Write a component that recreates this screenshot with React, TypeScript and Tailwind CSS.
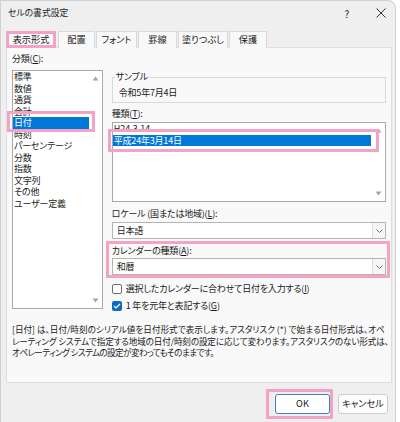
import type { ReactNode } from 'react';

const categories = ['標準', '数値', '通貨', '会計', '日付', '時刻', 'パーセンテージ', '分数', '指数', '文字列', 'その他', 'ユーザー定義'];
const tabs = [
  { label: '表示形式', w: 'w-[50px]' },
  { label: '配置', w: 'w-[37px]' },
  { label: 'フォント', w: 'w-[41px]' },
  { label: '罫線', w: 'w-[39px]' },
  { label: '塗りつぶし', w: 'w-[50px]' },
  { label: '保護', w: 'w-[38px]' },
];

function ArrowUp() {
  return (
    <svg width="7" height="5" viewBox="0 0 7 5">
      <path d="M3.5 0.5 L6.5 4.5 L0.5 4.5 Z" fill="#a6a6a6" />
    </svg>
  );
}

function ArrowDown() {
  return (
    <svg width="7" height="5" viewBox="0 0 7 5">
      <path d="M0.5 0.5 L6.5 0.5 L3.5 4.5 Z" fill="#a6a6a6" />
    </svg>
  );
}

function Combo({ value }: { value: string }) {
  return (
    <div className="flex h-[17px] bg-white border border-[#b4b4b4]">
      <div className="flex-1 flex items-center pl-[4px] leading-none">{value}</div>
      <div className="w-[13px] flex items-center justify-center border-l border-[#dcdcdc] bg-[#f6f6f6]">
        <svg width="7" height="4" viewBox="0 0 7 4">
          <path d="M0.5 0.5 L3.5 3.5 L6.5 0.5" fill="none" stroke="#5f5f5f" strokeWidth="0.9" />
        </svg>
      </div>
    </div>
  );
}

function Check({ checked, children }: { checked?: boolean; children: ReactNode }) {
  return (
    <div className="flex items-center h-[11px] gap-[4px]">
      {checked ? (
        <div className="w-[10px] h-[10px] rounded-[2px] bg-[#0f6cbd] flex items-center justify-center">
          <svg width="8" height="6" viewBox="0 0 8 6">
            <path d="M1 3 L3 5 L7 1" fill="none" stroke="white" strokeWidth="1.2" />
          </svg>
        </div>
      ) : (
        <div className="w-[10px] h-[10px] rounded-[2px] border border-[#6e6e6e] bg-white" />
      )}
      <span className="leading-none">{children}</span>
    </div>
  );
}

export default function App() {
  return (
    <div className="w-[400px] h-[422px] bg-white overflow-hidden text-[9px] tracking-[-0.2px] text-[#1a1a1a] font-['Noto_Sans_CJK_JP','Noto_Sans',sans-serif] [font-feature-settings:'palt']">
      <div className="w-[396px] h-full bg-[#efefef] rounded-tr-[8px] border-r border-t border-l border-[#d0d0d0] flex flex-col">
        {/* title bar */}
        <div className="h-[24px] flex items-center pl-[7px] pr-[9px] shrink-0">
          <span className="text-[8.8px] tracking-normal">セルの書式設定</span>
          <div className="flex-1" />
          <span className="text-[10px] mr-[27px]">?</span>
          <svg width="10" height="10" viewBox="0 0 10 10">
            <path d="M0.5 0.5 L9.5 9.5 M9.5 0.5 L0.5 9.5" stroke="#333" strokeWidth="1" />
          </svg>
        </div>

        {/* tabs */}
        <div className="flex h-[17px] mt-[6px] pl-[5px] gap-px relative z-10 -mb-px shrink-0 text-[9.2px] tracking-normal">
          {tabs.map((t, i) =>
            i === 0 ? (
              <div key={t.label} className={`${t.w} mr-px flex items-center justify-center bg-[#fbfbfb] border-[3px] border-[#f4a3c6]`}>
                {t.label}
              </div>
            ) : (
              <div key={t.label} className={`${t.w} flex items-center justify-center bg-[#f8f8f8] border border-b-0 border-[#d9d9d9]`}>
                {t.label}
              </div>
            ),
          )}
        </div>

        {/* page */}
        <div className="ml-[5px] w-[386px] h-[336px] bg-[#f9f9f9] border border-[#dedede] shrink-0 px-[5px]">
          <div className="flex gap-[9px]">
            {/* 分類 */}
            <div className="w-[91px] pt-[5px] relative">
              <div className="h-[12px] leading-[12px]">分類(<span className="underline">C</span>):</div>
              <div className="mt-[5px] h-[239px] bg-white border border-[#a9a9a9] flex">
                <div className="flex-1">
                  {categories.map((c) => (
                    <div
                      key={c}
                      className={`h-[11.5px] leading-[11.5px] pl-[1px] ${c === '日付' ? 'bg-[#0078d7] text-white' : ''}`}
                    >
                      {c}
                    </div>
                  ))}
                </div>
                <div className="w-[13px] flex flex-col items-center justify-between py-[5px]">
                  <ArrowUp />
                  <ArrowDown />
                </div>
              </div>
              <div className="absolute left-[-5px] top-[63px] w-[88px] h-[21px] border-[3px] border-[#f4a3c6]" />
            </div>

            {/* right side */}
            <div className="w-[275px] pt-[23px] relative">
              <fieldset className="border border-[#d9d9d9] px-[6px] pb-[3px] pt-[4px]">
                <legend className="ml-[-4px] px-[1px] h-[12px] leading-[12px]">サンプル</legend>
                <div className="h-[12px] leading-[12px]">令和5年7月4日</div>
              </fieldset>

              <div className="mt-[5px] h-[12px] leading-[12px]">種類(<span className="underline">T</span>):</div>
              <div className="mt-[2px] h-[80px] bg-white border border-[#a9a9a9] flex">
                <div className="flex-1">
                  <div className="h-[11.5px] leading-[11.5px] pl-[1px] tracking-normal">H24.3.14</div>
                  <div className="h-[11.5px] leading-[11.5px] pl-[1px] bg-[#0078d7] text-white">平成24年3月14日</div>
                </div>
                <div className="w-[14px] flex flex-col items-center justify-between py-[5px]">
                  <ArrowUp />
                  <ArrowDown />
                </div>
              </div>
              <div className="absolute left-[-4px] top-[81px] w-[271px] h-[23px] border-[3px] border-[#f4a3c6]" />

              <div className="mt-[6px] h-[12px] leading-[12px]">ロケール (国または地域)(<span className="underline">L</span>):</div>
              <div className="mt-[2px]">
                <Combo value="日本語" />
              </div>

              <div className="mt-[2px] ml-[-6px] mr-[-4px] border-[3px] border-[#f4a3c6] pl-[3px] pr-px pt-px">
                <div className="h-[12px] leading-[12px]">カレンダーの種類(<span className="underline">A</span>):</div>
                <div className="mt-px">
                  <Combo value="和暦" />
                </div>
              </div>

              <div className="mt-[5px]">
                <Check>選択したカレンダーに合わせて日付を入力する(<span className="underline">I</span>)</Check>
              </div>
              <div className="mt-[6px]">
                <Check checked>1 年を元年と表記する(<span className="underline">G</span>)</Check>
              </div>
            </div>
          </div>

          <div className="mt-[13px] leading-[11.5px] text-[8.6px] whitespace-nowrap">
            <div className="tracking-normal">[日付] は、日付/時刻のシリアル値を日付形式で表示します。アスタリスク (*) で始まる日付形式は、オペ</div>
            <div className="tracking-[-0.15px]">レーティング システムで指定する地域の日付/時刻の設定に応じて変わります。アスタリスクのない形式は、</div>
            <div className="tracking-[-0.6px]">オペレーティング システムの設定が変わってもそのままです。</div>
          </div>
        </div>

        {/* buttons */}
        <div className="flex justify-end items-start pt-[6px] pr-[7px] gap-[5px] text-[9.2px] tracking-normal">
          <div className="border-[3px] border-[#f4a3c6] pl-[6px] pt-[2px] pb-[2px]">
            <button className="w-[55px] h-[20px] bg-white border border-[#3a7fc8] rounded-[3px] leading-none">OK</button>
          </div>
          <button className="mt-[5px] w-[50px] h-[20px] bg-[#fdfdfd] border border-[#cdcdcd] rounded-[3px] leading-none">キャンセル</button>
        </div>
      </div>
    </div>
  );
}
